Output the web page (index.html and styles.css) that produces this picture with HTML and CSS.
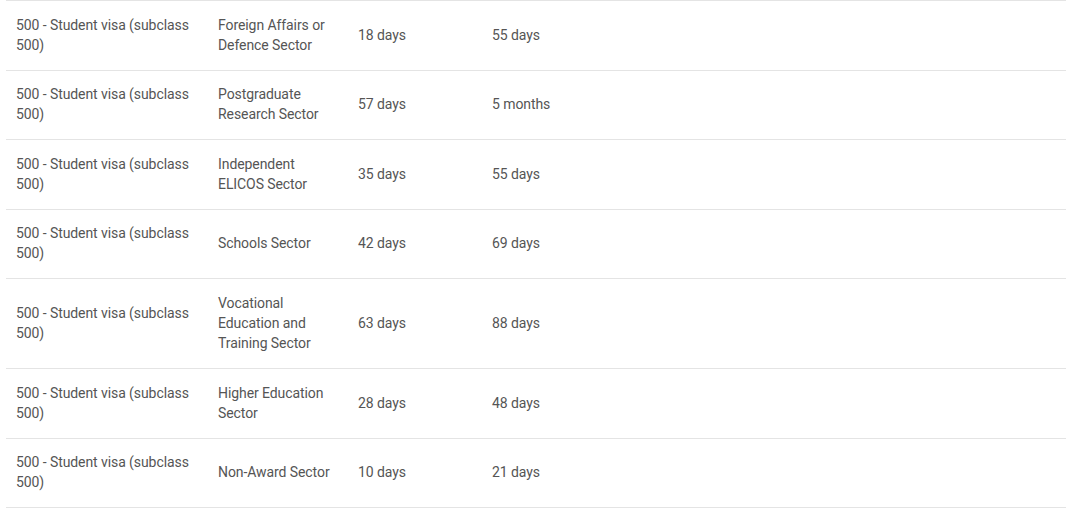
FILE: index.html
```html
<!DOCTYPE html>
<html>
<head>
<meta charset="utf-8">
<link rel="stylesheet" href="styles.css">
</head>
<body>
<table class="visa-table">
  <colgroup>
    <col class="c1"><col class="c2"><col class="c3"><col class="c4">
  </colgroup>
  <tbody>
    <tr><td>500 - Student visa (subclass 500)</td><td>Foreign Affairs or Defence Sector</td><td>18 days</td><td>55 days</td></tr>
    <tr><td>500 - Student visa (subclass 500)</td><td>Postgraduate Research Sector</td><td>57 days</td><td>5 months</td></tr>
    <tr><td>500 - Student visa (subclass 500)</td><td>Independent ELICOS Sector</td><td>35 days</td><td>55 days</td></tr>
    <tr><td>500 - Student visa (subclass 500)</td><td>Schools Sector</td><td>42 days</td><td>69 days</td></tr>
    <tr><td>500 - Student visa (subclass 500)</td><td>Vocational Education and Training Sector</td><td>63 days</td><td>88 days</td></tr>
    <tr><td>500 - Student visa (subclass 500)</td><td>Higher Education Sector</td><td>28 days</td><td>48 days</td></tr>
    <tr><td>500 - Student visa (subclass 500)</td><td>Non-Award Sector</td><td>10 days</td><td>21 days</td></tr>
  </tbody>
</table>
</body>
</html>
```
FILE: styles.css
```css
html, body {
  margin: 0;
  padding: 0;
  background: #fff;
}
body {
  font-family: Roboto, "Liberation Sans", Arial, sans-serif;
  font-size: 14px;
  color: #555;
}
.visa-table {
  margin-left: 6px;
  width: 1060px;
  border-collapse: collapse;
  table-layout: fixed;
}
.c1 { width: 202px; }
.c2 { width: 140px; }
.c3 { width: 134px; }
.c4 { width: auto; }
.visa-table td {
  border-top: 1px solid #e4e4e4;
  border-bottom: 1px solid #e4e4e4;
  padding: 13.6px 10px 15px;
  line-height: 20px;
  letter-spacing: -0.08px;
  vertical-align: middle;
  text-align: left;
}
```
